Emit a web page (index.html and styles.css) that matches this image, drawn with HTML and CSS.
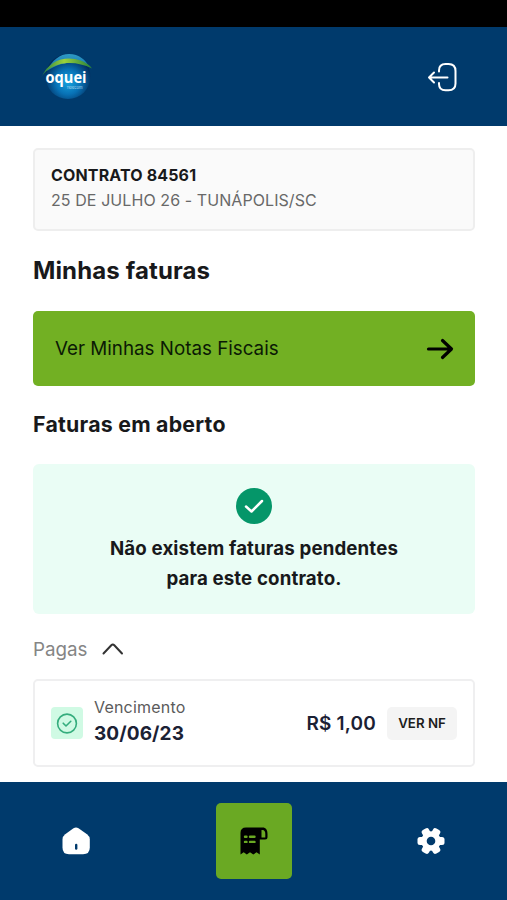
FILE: index.html
```html
<!DOCTYPE html>
<html lang="pt-BR">
<head>
    <meta charset="UTF-8">
    <meta name="viewport" content="width=device-width, initial-scale=1.0">
    <title>Minhas faturas</title>
    <link rel="stylesheet" href="styles.css">
</head>
<body>
    <div class="status-bar"></div>

    <header class="header">
        <svg class="logo" viewBox="0 0 54 50" aria-label="Oquei Telecom">
            <defs>
                <radialGradient id="globe" cx="50%" cy="62%" r="55%">
                    <stop offset="0" stop-color="#18a5e0"/>
                    <stop offset="0.5" stop-color="#0872b6"/>
                    <stop offset="1" stop-color="#022c5c"/>
                </radialGradient>
                <linearGradient id="shine" x1="0" y1="0" x2="0" y2="1">
                    <stop offset="0" stop-color="#2f9bc4"/>
                    <stop offset="1" stop-color="#0b69ab"/>
                </linearGradient>
                <linearGradient id="swoosh" x1="0" y1="0" x2="1" y2="0">
                    <stop offset="0" stop-color="#237c42"/>
                    <stop offset="0.45" stop-color="#9bd13c"/>
                    <stop offset="1" stop-color="#237f3c"/>
                </linearGradient>
            </defs>
            <circle cx="28" cy="24.500" r="22.500" fill="url(#globe)"/>
            <path d="M7 19C12 8 20 2 29 2C39 2 46 8 49 15C38 8 22 9 7 19Z" fill="url(#shine)"/>
            <path d="M1.500 25C8 10 22 4.500 35 7C43 8.500 49 12 52 16.500C41 11 29 9.500 19 12.500C11 15 5 19 1.500 25Z" fill="url(#swoosh)"/>
            <text class="logo-name" x="5.500" y="31" textLength="41" lengthAdjust="spacingAndGlyphs">oquei</text>
            <text class="logo-sub" x="26.500" y="36.500" textLength="16">Telecom</text>
        </svg>
        <svg class="logout" viewBox="0 0 32 32">
            <path d="M12 10.500V9.500C12 5.500 14.500 3 18.500 3H21.500C26 3 28.500 5.500 28.500 10V22.500C28.500 27 26 29.300 21.500 29.300H18.500C14.500 29.300 12 27 12 23V22"/>
            <path d="M20.500 16.500H2M7 11.500L2 16.500L7 21.500"/>
        </svg>
    </header>

    <main class="content">
        <div class="contract">
            <strong>CONTRATO 84561</strong>
            <span>25 DE JULHO 26 - TUNÁPOLIS/SC</span>
        </div>

        <h1>Minhas faturas</h1>

        <a class="notes-button">
            <span>Ver Minhas Notas Fiscais</span>
            <svg viewBox="0 0 28 24">
                <path d="M2.500 12H25M16.500 3.500L25.500 12L16.500 20.500"/>
            </svg>
        </a>

        <h2>Faturas em aberto</h2>

        <div class="empty">
            <svg viewBox="0 0 36 36">
                <circle cx="18" cy="18" r="18"/>
                <path d="M10 18.500L15.500 23.500L26 13"/>
            </svg>
            <p>Não existem faturas pendentes<br>para este contrato.</p>
        </div>

        <div class="paid-toggle">
            <span>Pagas</span>
            <svg viewBox="0 0 22 14">
                <path d="M1.500 11.500L9.300 3.200Q10.800 1.600 12.300 3.200L20 11.500"/>
            </svg>
        </div>

        <div class="invoice">
            <div class="invoice-icon">
                <svg viewBox="0 0 22 22">
                    <circle cx="11" cy="11.500" r="9.400"/>
                    <path d="M7.200 11.200L10 14L14.800 9.300"/>
                </svg>
            </div>
            <div class="invoice-date">
                <span>Vencimento</span>
                <strong>30/06/23</strong>
            </div>
            <strong class="invoice-value">R$ 1,00</strong>
            <button class="invoice-button" type="button">VER NF</button>
        </div>
    </main>

    <nav class="nav">
        <a class="nav-item">
            <svg class="home" viewBox="0 0 28 28">
                <path class="fill" d="M11.500 1.200Q14 -0.300 16.500 1.200L25 7.200Q27.800 9.200 27.800 12.500V20.500Q27.800 27.300 21 27.300H7Q0.500 27.300 0.500 20.500V12.500Q0.500 9.200 3.200 7.200Z"/>
                <path class="door" d="M14.200 18V21.500"/>
            </svg>
        </a>
        <a class="nav-item active">
            <svg class="receipt" viewBox="0 0 28 28">
                <path d="M6 0.500H22.500C26 0.500 27.500 3 27.500 7V10Q27.500 12.500 25 12.500H19.800V27.500L16.500 25.300L13.300 27.500L10 25.300L6.800 27.500L3.700 25.300L0.500 27.500V6Q0.500 0.500 6 0.500Z"/>
                <path class="hole" d="M21.500 3C24.500 2.500 25.300 4.500 25.300 7V10.500H21.500Z"/>
                <path class="lines" d="M5 9.700H6.500M10 9.700H14.500M5 14.900H6.500M10 14.900H14.500"/>
            </svg>
        </a>
        <a class="nav-item">
            <svg class="gear" viewBox="-14 -14 28 28">
                <g class="teeth">
                    <rect x="-4" y="-13.500" width="8" height="27" rx="2.500" transform="rotate(30)"/>
                    <rect x="-4" y="-13.500" width="8" height="27" rx="2.500" transform="rotate(90)"/>
                    <rect x="-4" y="-13.500" width="8" height="27" rx="2.500" transform="rotate(150)"/>
                    <circle r="9.800"/>
                </g>
                <circle class="hub" r="4.300"/>
            </svg>
        </a>
    </nav>
</body>
</html>
```

FILE: styles.css
```css
* {
    box-sizing: border-box;
}

body {
    margin: 0;
    height: 900px;
    display: flex;
    flex-direction: column;
    background-color: #fff;
    color: #18191b;
    font-family: Inter, "Liberation Sans", sans-serif;
}

svg {
    display: block;
    flex-shrink: 0;
    fill: none;
    stroke-linecap: round;
    stroke-linejoin: round;
}

.status-bar {
    height: 27px;
    background-color: #000;
}

.header {
    height: 99px;
    padding: 0 48px 0 40px;
    display: flex;
    align-items: center;
    justify-content: space-between;
    background-color: #003a6c;
}

.logo {
    width: 54px;
    height: 50px;
}

.logo-name {
    fill: #fff;
    font-family: "Open Sans", sans-serif;
    font-size: 16px;
    font-weight: 700;
}

.logo-sub {
    fill: #b5dcf0;
    font-size: 4px;
}

.logout {
    width: 32px;
    height: 32px;
    stroke: #fff;
    stroke-width: 2;
}

.content {
    flex: 1;
    padding: 22px 32px 0 33px;
}

.contract {
    height: 83px;
    padding: 13px 16px;
    display: flex;
    flex-direction: column;
    border: 2px solid #eeeeee;
    border-radius: 5px;
    background-color: #fafafa;
    font-size: 16px;
    line-height: 25px;
}

.contract strong {
    font-weight: 700;
    letter-spacing: 0.15px;
}

.contract span {
    color: #686868;
    letter-spacing: 0.08px;
}

h1 {
    margin: 24px 0;
    font-size: 24px;
    font-weight: 700;
    line-height: 32px;
    letter-spacing: 0.13px;
}

.notes-button {
    height: 75px;
    padding: 0 21px 0 22px;
    display: flex;
    align-items: center;
    justify-content: space-between;
    border-radius: 5px;
    background-color: #72b023;
    color: #0b1a05;
    font-size: 18.8px;
}

.notes-button svg {
    width: 28px;
    height: 24px;
    stroke: #000;
    stroke-width: 3.2;
}

h2 {
    margin: 24px 0 26px;
    font-size: 21.3px;
    font-weight: 700;
    line-height: 28px;
    letter-spacing: 0.24px;
}

.empty {
    height: 150px;
    padding-top: 24px;
    display: flex;
    flex-direction: column;
    align-items: center;
    border-radius: 6px;
    background-color: #eafdf5;
}

.empty svg {
    width: 36px;
    height: 36px;
}

.empty circle {
    fill: #059669;
}

.empty path {
    stroke: #fff;
    stroke-width: 2.5;
}

.empty p {
    margin: 10px 0 0;
    font-size: 18.7px;
    font-weight: 700;
    line-height: 30px;
    letter-spacing: 0.13px;
    text-align: center;
}

.paid-toggle {
    height: 65px;
    padding-top: 5px;
    display: flex;
    align-items: center;
    gap: 14px;
    color: #858585;
    font-size: 18.8px;
}

.paid-toggle svg {
    width: 22px;
    height: 14px;
    stroke: #333;
    stroke-width: 2;
}

.invoice {
    height: 88px;
    padding: 0 16px;
    display: flex;
    align-items: center;
    border: 2px solid #efeff0;
    border-radius: 5px;
}

.invoice-icon {
    width: 32px;
    height: 32px;
    margin-right: 11px;
    display: flex;
    align-items: center;
    justify-content: center;
    border-radius: 4px;
    background-color: #d0fae4;
}

.invoice-icon svg {
    width: 22px;
    height: 22px;
    stroke: #35ad7d;
    stroke-width: 1.6;
}

.invoice-date {
    flex: 1;
    display: flex;
    flex-direction: column;
    line-height: 26px;
    margin-top: -6px;
}

.invoice-date span {
    color: #5b5b5b;
    font-size: 16px;
    letter-spacing: 0.2px;
}

.invoice-date strong,
.invoice-value {
    color: #1b2134;
    font-size: 19px;
    font-weight: 700;
}

.invoice-date strong {
    line-height: 27px;
    letter-spacing: 0.1px;
}

.invoice-value {
    font-weight: 600;
    letter-spacing: 0.2px;
}

.invoice-button {
    width: 70px;
    height: 33px;
    margin-left: 11px;
    padding: 0;
    border: 0;
    border-radius: 5px;
    background-color: #f4f4f4;
    color: #1d1d1d;
    font-family: inherit;
    font-size: 13.3px;
    font-weight: 600;
}

.nav {
    height: 118px;
    padding: 0 38px;
    display: flex;
    align-items: center;
    justify-content: space-between;
    background-color: #003a6c;
}

.nav-item {
    width: 76px;
    height: 76px;
    display: flex;
    align-items: center;
    justify-content: center;
    border-radius: 5px;
}

.nav-item svg {
    width: 28px;
    height: 28px;
}

.active {
    background-color: #6aa923;
}

.home .fill,
.teeth {
    fill: #fff;
}

.door {
    stroke: #003a6c;
    stroke-width: 2.4;
}

.receipt {
    fill: #000;
}

.hole {
    fill: #6aa923;
}

.lines {
    stroke: #6aa923;
    stroke-width: 2.4;
}

.hub {
    fill: #003a6c;
}
```
